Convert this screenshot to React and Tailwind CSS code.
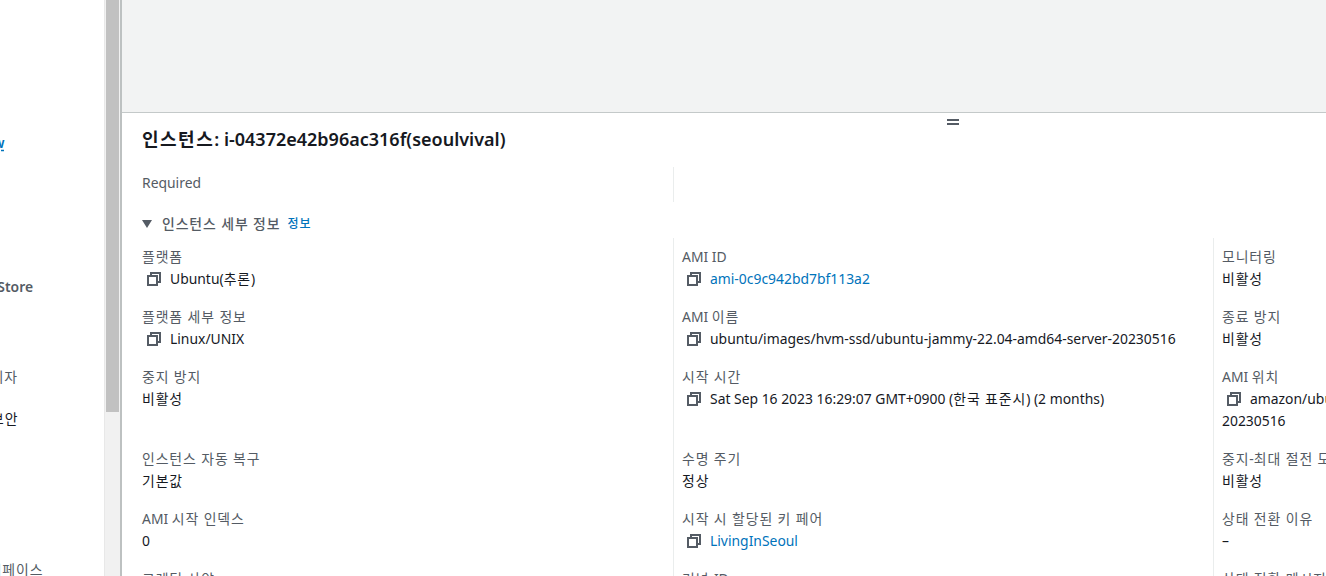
import React from "react";

const font = "font-['Noto_Sans','Noto_Sans_CJK_KR',sans-serif]";

// Hangul runs sit wider in the original, so they get a bit of tracking
function Ko({ children }) {
  const parts = children.split(/([가-힣][가-힣 ]*)/);
  return parts.map((part, i) =>
    i % 2 === 1 ? (
      <span key={i} className="tracking-[0.9px]">
        {part}
      </span>
    ) : (
      part
    )
  );
}

function CopyIcon() {
  return (
    <svg width="16" height="16" viewBox="0 0 16 16" fill="none" stroke="#545b64" strokeWidth="2" className="shrink-0">
      <path d="M5 4V2h9v9h-2" />
      <rect x="2" y="5" width="9" height="9" />
    </svg>
  );
}

function Copyable({ children, link }) {
  return (
    <div className="flex items-center gap-2 pl-1">
      <CopyIcon />
      <span className={link ? "text-[#0073bb]" : ""}>
        <Ko>{children}</Ko>
      </span>
    </div>
  );
}

function Field({ label, children }) {
  return (
    <div>
      <div className="text-[#545b64] leading-5">
        <Ko>{label}</Ko>
      </div>
      <div className="text-[#16191f] leading-[22px] mt-px">
        {typeof children === "string" ? <Ko>{children}</Ko> : children}
      </div>
    </div>
  );
}

const rows = [
  {
    h: "h-[69px]",
    pad: "pt-[9px]",
    cells: [
      ["플랫폼", <Copyable>Ubuntu(추론)</Copyable>],
      ["AMI ID", <Copyable link>ami-0c9c942bd7bf113a2</Copyable>],
      ["모니터링", "비활성"],
    ],
  },
  {
    h: "h-[60px]",
    cells: [
      ["플랫폼 세부 정보", <Copyable>Linux/UNIX</Copyable>],
      ["AMI 이름", <Copyable>ubuntu/images/hvm-ssd/ubuntu-jammy-22.04-amd64-server-20230516</Copyable>],
      ["종료 방지", "비활성"],
    ],
  },
  {
    h: "h-[82px]",
    cells: [
      ["중지 방지", "비활성"],
      ["시작 시간", <Copyable>Sat Sep 16 2023 16:29:07 GMT+0900 (한국 표준시) (2 months)</Copyable>],
      [
        "AMI 위치",
        <div className="whitespace-nowrap">
          <Copyable>amazon/ubuntu/images/hvm-ssd/ubuntu-jammy-22.04-amd64-server-</Copyable>
          <div>20230516</div>
        </div>,
      ],
    ],
  },
  {
    h: "h-[60px]",
    cells: [
      ["인스턴스 자동 복구", "기본값"],
      ["수명 주기", "정상"],
      ["중지-최대 절전 모드 동작", "비활성"],
    ],
  },
  {
    h: "h-[60px]",
    cells: [
      ["AMI 시작 인덱스", "0"],
      ["시작 시 할당된 키 페어", <Copyable link>LivingInSeoul</Copyable>],
      ["상태 전환 이유", "–"],
    ],
  },
  {
    h: "h-[60px]",
    cells: [
      ["크레딧 사양", "–"],
      ["커널 ID", "–"],
      ["상태 전환 메시지", "–"],
    ],
  },
];

export default function App() {
  return (
    <div className={`${font} h-[576px] w-[1326px] overflow-hidden flex text-[13.9px] bg-white`}>
      {/* Left nav, cut off by the scrolled page */}
      <aside className="w-[104px] shrink-0 overflow-hidden whitespace-nowrap">
        <div className="h-[133px]" />
        <div className="h-5 leading-5 -ml-[59px] text-[#0073bb] font-semibold underline decoration-dashed underline-offset-2">Overview</div>
        <div className="h-[124px]" />
        <div className="h-5 leading-5 -ml-[33px] text-[#545b64] font-semibold">App Store</div>
        <div className="h-[70px]" />
        <div className="h-5 leading-5 -ml-[23px] text-[#545b64]">
          <Ko>관리자</Ko>
        </div>
        <div className="h-[22px]" />
        <div className="h-5 leading-5 -ml-[9px] text-[#16191f]">
          <Ko>보안</Ko>
        </div>
        <div className="h-[131px]" />
        <div className="h-5 leading-5 -ml-[25px] text-[#545b64]">
          <Ko>인터페이스</Ko>
        </div>
      </aside>

      {/* Scrollbar */}
      <div className="w-4 shrink-0 bg-[#f1f1f1] flex justify-center border-l border-[#e8e8e8]">
        <div className="w-[13px] h-[412px] bg-[#c1c1c1]" />
      </div>

      {/* Main */}
      <main className="flex-1 min-w-0 border-l-2 border-[#bdc1c1] flex flex-col">
        <div className="h-[113px] shrink-0 bg-[#f2f3f3] border-b border-[#c4c9c9]" />
        <div className="relative flex-1 pl-5">
          <div className="absolute left-[825px] top-[6px] w-[12px] h-[6px] border-y-2 border-[#545b64]" />
          <h1 className="pt-[14px] h-[54px] text-[18px] leading-6 font-semibold text-[#16191f] whitespace-nowrap">
            <span className="tracking-[1.5px]">인스턴스</span>: i-04372e42b96ac316f(seoulvival)
          </h1>
          <div className="grid grid-cols-[531px_540px_540px] h-[35px]">
            <div className="text-[#545b64] leading-[31px]">Required</div>
            <div className="border-l border-[#eaeded]" />
          </div>
          <div className="flex items-center h-[36px] pt-2 text-[#545b64] font-medium">
            <span className="w-0 h-0 mr-2 border-x-[5px] border-x-transparent border-t-[8px] border-t-[#545b64]" />
            <span className="ml-[2px]">
              <Ko>인스턴스 세부 정보</Ko>
            </span>
            <span className="ml-[7px] text-[#0073bb] text-[12px]">
              <Ko>정보</Ko>
            </span>
          </div>
          {rows.map((row, i) => (
            <div key={i} className={`grid grid-cols-[531px_540px_540px] whitespace-nowrap ${row.h}`}>
              {row.cells.map(([label, value], j) => (
                <div key={j} className={`${j > 0 ? "border-l border-[#eaeded] pl-2" : ""} ${row.pad || ""}`}>
                  <Field label={label}>{value}</Field>
                </div>
              ))}
            </div>
          ))}
        </div>
      </main>
    </div>
  );
}
